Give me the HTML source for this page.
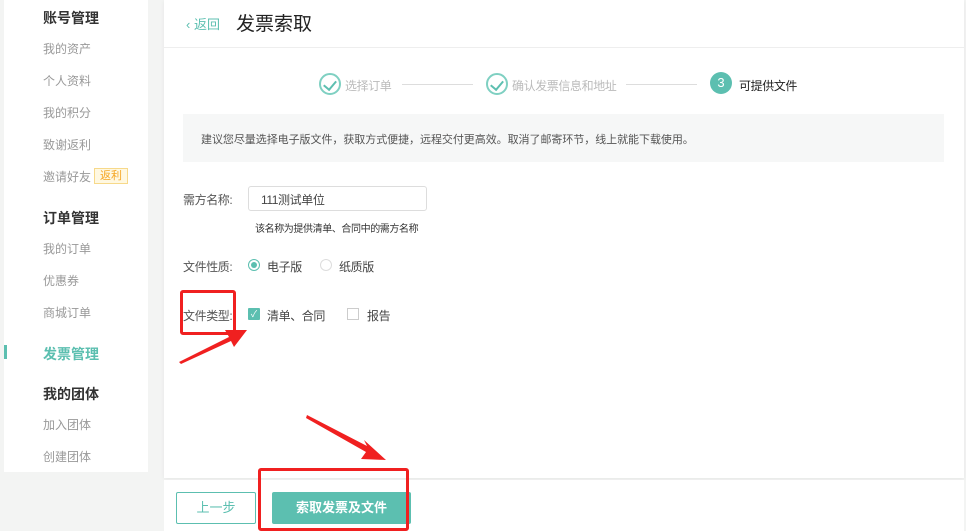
<!DOCTYPE html>
<html><head><meta charset="utf-8"><style>
*{margin:0;padding:0;box-sizing:border-box}
body{width:966px;height:531px;background:#f3f4f3;position:relative;overflow:hidden;font-family:"Liberation Sans","Noto Sans CJK SC",sans-serif;color:#333}
.a{position:absolute;white-space:nowrap}
.side{position:absolute;left:4px;top:0;width:144px;height:472px;background:#fff}
.h{font-size:14px;font-weight:bold;color:#333}
.i{font-size:12px;color:#999}
.main{position:absolute;left:164px;top:0;width:800px;height:478px;background:#fff;box-shadow:0 1px 4px rgba(0,0,0,.06)}
.foot{position:absolute;left:164px;top:480px;width:800px;height:51px;background:#fff}
.chk{position:absolute;width:22px;height:22px;border:2px solid #7fd0c2;border-radius:50%}
.chk:after{content:"";position:absolute;left:5px;top:3px;width:6px;height:10px;border:solid #5cbfb0;border-width:0 2px 2px 0;transform:rotate(40deg)}
.line{position:absolute;height:1px;background:#ddd;top:84px}
.red{position:absolute;border:3px solid #f02020;border-radius:3px}
.f{font-size:12px;color:#444;letter-spacing:-0.4px}
</style></head><body>
<div class="side"></div>
<div class="a h" style="left:43px;top:8px">账号管理</div>
<div class="a i" style="left:43px;top:40px">我的资产</div>
<div class="a i" style="left:43px;top:72px">个人资料</div>
<div class="a i" style="left:43px;top:104px">我的积分</div>
<div class="a i" style="left:43px;top:136px">致谢返利</div>
<div class="a i" style="left:43px;top:168px">邀请好友</div>
<div class="a" style="left:94px;top:168px;width:34px;height:16px;background:#fff8e1;border:1px solid #f7d98a;color:#f5a623;font-size:11px;text-align:center;line-height:14px">返利</div>
<div class="a h" style="left:43px;top:208px">订单管理</div>
<div class="a i" style="left:43px;top:240px">我的订单</div>
<div class="a i" style="left:43px;top:272px">优惠券</div>
<div class="a i" style="left:43px;top:304px">商城订单</div>
<div class="a" style="left:4px;top:345px;width:3px;height:14px;background:#5cbfb0"></div>
<div class="a h" style="left:43px;top:344px;color:#5cbfb0">发票管理</div>
<div class="a h" style="left:43px;top:384px">我的团体</div>
<div class="a i" style="left:43px;top:416px">加入团体</div>
<div class="a i" style="left:43px;top:448px">创建团体</div>

<div class="main"></div>
<div class="a" style="left:164px;top:47px;width:800px;height:1px;background:#eee"></div>
<div class="a" style="left:186px;top:14px;font-size:13px;color:#5cbfb0">‹ 返回</div>
<div class="a" style="left:236px;top:9px;font-size:19px;color:#222">发票索取</div>

<div class="chk" style="left:319px;top:73px"></div>
<div class="a" style="left:345px;top:77px;font-size:12px;color:#bbb;letter-spacing:-0.4px">选择订单</div>
<div class="line" style="left:402px;width:71px"></div>
<div class="chk" style="left:486px;top:73px"></div>
<div class="a" style="left:512px;top:77px;font-size:12px;color:#bbb;letter-spacing:-0.4px">确认发票信息和地址</div>
<div class="line" style="left:626px;width:71px"></div>
<div class="a" style="left:710px;top:72px;width:22px;height:22px;border-radius:50%;background:#5cbfb0;color:#fff;font-size:13px;text-align:center;line-height:22px">3</div>
<div class="a" style="left:739px;top:77px;font-size:12px;color:#222;letter-spacing:-0.4px">可提供文件</div>

<div class="a" style="left:183px;top:114px;width:761px;height:48px;background:#f6f7f7"></div>
<div class="a" style="left:201px;top:131px;font-size:11px;color:#555;letter-spacing:-0.05px">建议您尽量选择电子版文件，获取方式便捷，远程交付更高效。取消了邮寄环节，线上就能下载使用。</div>

<div class="a f" style="left:183px;top:191px;color:#555">需方名称:</div>
<div class="a" style="left:248px;top:186px;width:179px;height:25px;border:1px solid #ddd;border-radius:3px"></div>
<div class="a f" style="left:261px;top:191px">111测试单位</div>
<div class="a" style="left:255px;top:220px;font-size:10px;color:#333;letter-spacing:-0.4px">该名称为提供清单、合同中的需方名称</div>

<div class="a f" style="left:183px;top:258px;color:#555">文件性质:</div>
<div class="a" style="left:248px;top:259px;width:12px;height:12px;border:1px solid #5cbfb0;border-radius:50%"></div>
<div class="a" style="left:251px;top:262px;width:6px;height:6px;background:#5cbfb0;border-radius:50%"></div>
<div class="a f" style="left:267px;top:258px">电子版</div>
<div class="a" style="left:320px;top:259px;width:12px;height:12px;border:1px solid #ddd;border-radius:50%"></div>
<div class="a f" style="left:339px;top:258px">纸质版</div>

<div class="a f" style="left:183px;top:307px;color:#555">文件类型:</div>
<div class="a" style="left:248px;top:308px;width:12px;height:12px;background:#5cbfb0;border-radius:1px;color:#fff;font-size:9px;text-align:center;line-height:12px">✓</div>
<div class="a f" style="left:267px;top:307px">清单、合同</div>
<div class="a" style="left:347px;top:308px;width:12px;height:12px;border:1px solid #ccc"></div>
<div class="a f" style="left:367px;top:307px">报告</div>

<div class="foot"></div>
<div class="a" style="left:176px;top:492px;width:80px;height:32px;border:1px solid #5cbfb0;border-radius:2px;color:#5cbfb0;font-size:13px;text-align:center;line-height:30px">上一步</div>
<div class="a" style="left:272px;top:492px;width:139px;height:32px;background:#5cbfb0;border-radius:2px;color:#fff;font-size:13px;font-weight:bold;text-align:center;line-height:32px">索取发票及文件</div>

<div class="red" style="left:180px;top:290px;width:56px;height:45px"></div>
<div class="red" style="left:258px;top:468px;width:151px;height:63px"></div>
<svg class="a" style="left:0;top:0" width="966" height="531">
<polygon points="179,362 229,337 225,330 247,330 234,347 231,341 181,364" fill="#f02020"/>
<polygon points="307,415 367,446 364,440 386,460 361,459 366,452 306,418" fill="#f02020"/>
</svg>
</body></html>
